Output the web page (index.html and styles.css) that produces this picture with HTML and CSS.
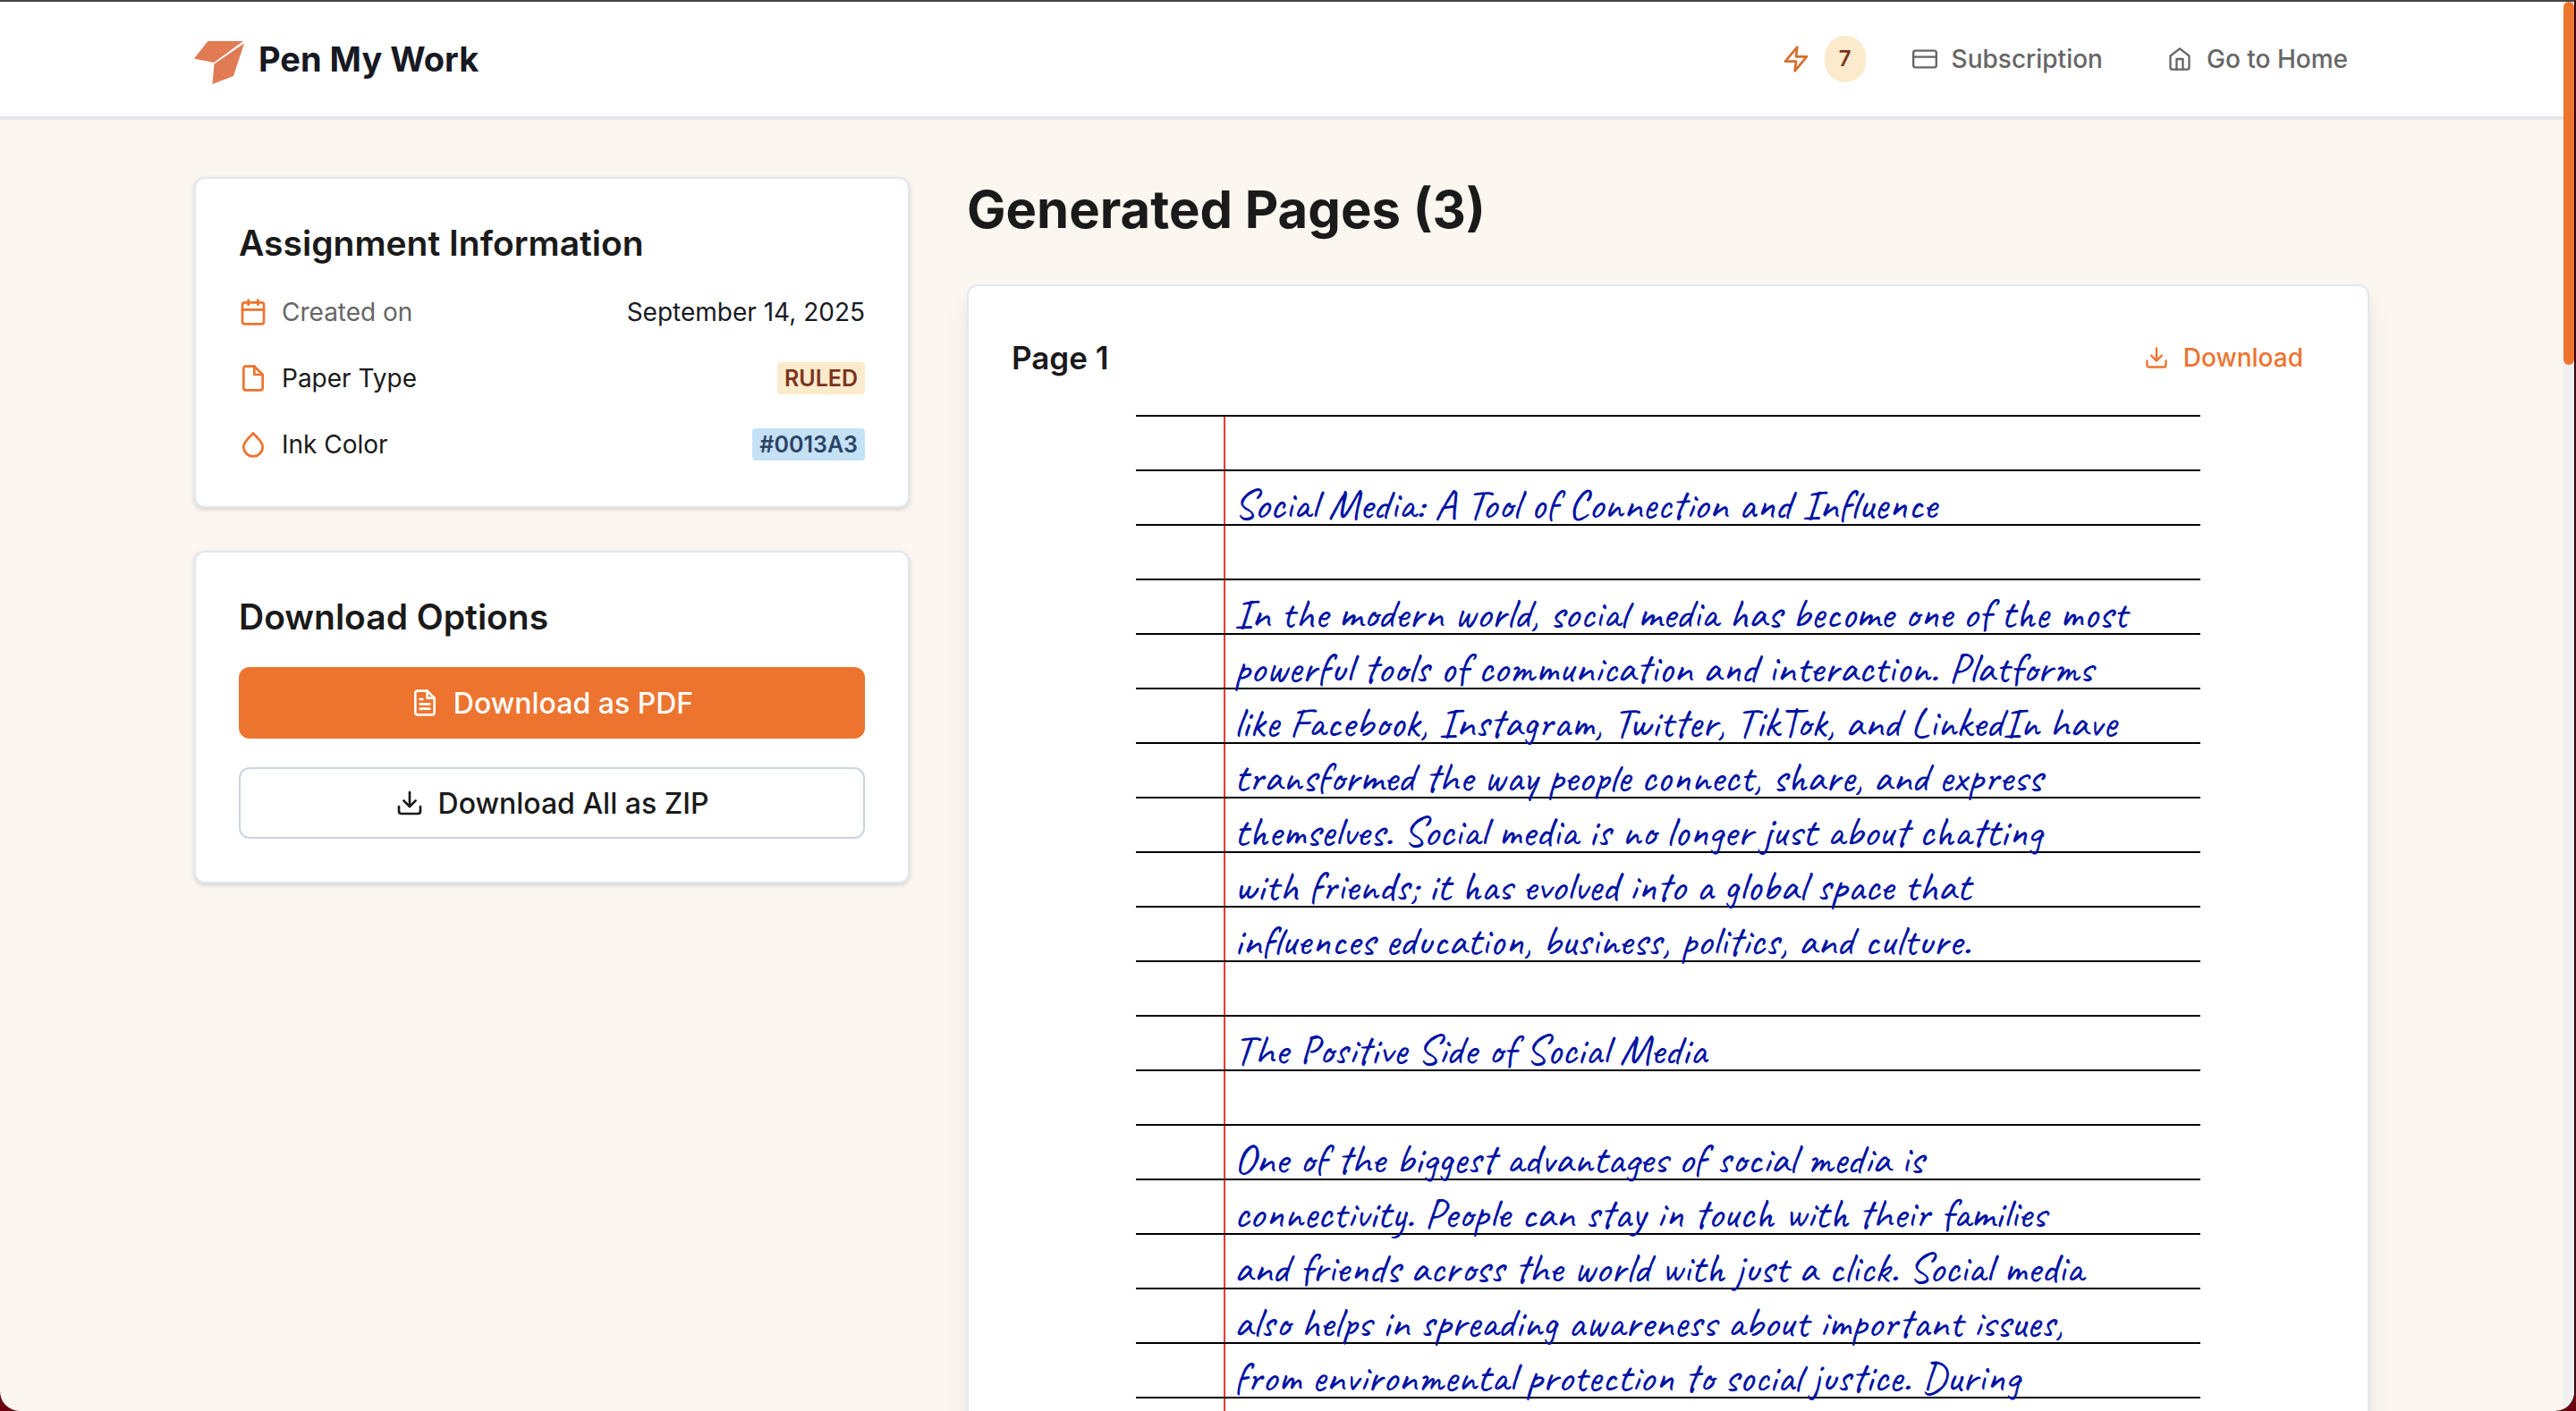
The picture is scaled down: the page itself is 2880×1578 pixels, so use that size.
FILE: index.html
```html
<!DOCTYPE html>
<html lang="en">
<head>
    <meta charset="UTF-8">
    <title>Pen My Work</title>
    <link rel="stylesheet" href="styles.css">
</head>
<body>
<div class="window">
    <div class="page">
        <!-- Header -->
        <header class="header">
            <div class="container header-inner">
                <a class="brand" href="#">
                    <svg class="logo" viewBox="0 -8 56 56" aria-hidden="true">
                        <path d="M15.500 0H55L22 24L0 19.500z"/>
                        <path d="M56 2.500L44 39L20.500 48L22.500 25.500z"/>
                    </svg>
                    <span>Pen My Work</span>
                </a>
                <nav class="nav">
                    <div class="credits">
                        <svg class="icon" viewBox="0 0 24 24"><path d="M13 2 3 14h9l-1 8 10-12h-9z"/></svg>
                        <span class="credits-count">7</span>
                    </div>
                    <a class="nav-link" href="#">
                        <svg class="icon icon-small" viewBox="0 0 24 24"><rect width="22" height="16" x="1" y="4" rx="2"/><path d="M1 10h22"/></svg>
                        Subscription
                    </a>
                    <a class="nav-link" href="#">
                        <svg class="icon icon-small" viewBox="0 0 24 24"><path d="m3 9 9-7 9 7v11a2 2 0 0 1-2 2H5a2 2 0 0 1-2-2z"/><path d="M9 22V12h6v10"/></svg>
                        Go to Home
                    </a>
                </nav>
            </div>
        </header>

        <!-- Main content -->
        <main class="container content">
            <aside class="sidebar">
                <section class="card">
                    <h2>Assignment Information</h2>
                    <dl class="info">
                        <div class="info-row">
                            <dt class="muted">
                                <svg class="icon" viewBox="0 0 24 24"><path d="M8 2v4M16 2v4"/><rect width="18" height="18" x="3" y="4" rx="2"/><path d="M3 10h18"/></svg>
                                Created on
                            </dt>
                            <dd>September 14, 2025</dd>
                        </div>
                        <div class="info-row">
                            <dt>
                                <svg class="icon" viewBox="0 0 24 24"><path d="M13 2H6a2 2 0 0 0-2 2v16a2 2 0 0 0 2 2h12a2 2 0 0 0 2-2V9z"/><path d="M13 2v7h7"/></svg>
                                Paper Type
                            </dt>
                            <dd class="badge badge-paper">RULED</dd>
                        </div>
                        <div class="info-row">
                            <dt>
                                <svg class="icon" viewBox="0 0 24 24"><path d="M12 2.500C9.500 6 4 9.500 4 14a8 8 0 0 0 16 0c0-4.500-5.500-8-8-11.500z"/></svg>
                                Ink Color
                            </dt>
                            <dd class="badge badge-ink">#0013A3</dd>
                        </div>
                    </dl>
                </section>

                <section class="card">
                    <h2>Download Options</h2>
                    <div class="actions">
                        <button class="button button-primary" type="button">
                            <svg class="icon" viewBox="0 0 24 24"><path d="M14 2H6a2 2 0 0 0-2 2v16a2 2 0 0 0 2 2h12a2 2 0 0 0 2-2V8z"/><path d="M14 2v6h6"/><path d="M10 9H8M16 13H8M16 17H8"/></svg>
                            Download as PDF
                        </button>
                        <button class="button button-outline" type="button">
                            <svg class="icon" viewBox="0 0 24 24"><path d="M21 15v4a2 2 0 0 1-2 2H5a2 2 0 0 1-2-2v-4"/><path d="m7 10 5 5 5-5"/><path d="M12 15V3"/></svg>
                            Download All as ZIP
                        </button>
                    </div>
                </section>
            </aside>

            <section class="pages">
                <h1>Generated Pages (3)</h1>
                <article class="page-card">
                    <div class="page-head">
                        <h3>Page 1</h3>
                        <button class="link-button" type="button">
                            <svg class="icon icon-small" viewBox="0 0 24 24"><path d="M21 15v4a2 2 0 0 1-2 2H5a2 2 0 0 1-2-2v-4"/><path d="m7 10 5 5 5-5"/><path d="M12 15V3"/></svg>
                            Download
                        </button>
                    </div>
                    <div class="paper">
                        <p>Social Media: A Tool of Connection and Influence</p>
                        <p>In the modern world, social media has become one of the most<br>
                            powerful tools of communication and interaction. Platforms<br>
                            like Facebook, Instagram, Twitter, TikTok, and LinkedIn have<br>
                            transformed the way people connect, share, and express<br>
                            themselves. Social media is no longer just about chatting<br>
                            with friends; it has evolved into a global space that<br>
                            influences education, business, politics, and culture.</p>
                        <p>The Positive Side of Social Media</p>
                        <p>One of the biggest advantages of social media is<br>
                            connectivity. People can stay in touch with their families<br>
                            and friends across the world with just a click. Social media<br>
                            also helps in spreading awareness about important issues,<br>
                            from environmental protection to social justice. During</p>
                    </div>
                </article>
            </section>
        </main>
    </div>
    <div class="scrollbar"><div class="scrollbar-thumb"></div></div>
</div>
</body>
</html>
```
FILE: styles.css
```css
* {
    box-sizing: border-box;
}

body {
    margin: 0;
    font-family: Inter, sans-serif;
    font-size: 28px;
    line-height: 40px;
    color: #1a1a1a;
    background-color: #6b0010;
}

h1, h2, h3, p, dl, dd {
    margin: 0;
}

.window {
    display: flex;
    height: 100vh;
    overflow: hidden;
    margin-right: 1px;
    border-top: 2px solid #444444;
    border-right: 1px solid #000000;
    border-radius: 0 0 22px 22px;
    background-color: #fbf6ef;
}

.page {
    flex: 1;
    min-width: 0;
    overflow: hidden;
}

.container {
    max-width: 2560px;
    margin: 0 auto;
    padding: 0 64px;
}

.icon {
    width: 32px;
    height: 32px;
    flex-shrink: 0;
    fill: none;
    stroke: currentColor;
    stroke-width: 2;
    stroke-linecap: round;
    stroke-linejoin: round;
}

.icon-small {
    width: 28px;
    height: 28px;
}

/* Header */
.header {
    background-color: #ffffff;
    border-bottom: 4px solid #e2e8ec;
}

.header-inner {
    display: flex;
    align-items: center;
    justify-content: space-between;
    height: 128px;
}

.brand {
    display: flex;
    align-items: center;
    gap: 16px;
    font-size: 38px;
    font-weight: 700;
    color: #171923;
    text-decoration: none;
}

.logo {
    width: 56px;
    height: 56px;
    fill: #e07b54;
}

.nav {
    display: flex;
    align-items: center;
    gap: 24px;
}

.credits {
    display: flex;
    align-items: center;
    gap: 16px;
    margin-right: 4px;
    color: #d46f2e;
}

.credits-count {
    padding: 6px 16px;
    border-radius: 26px;
    font-size: 24px;
    font-weight: 600;
    color: #7b341e;
    background-color: #fbeacb;
}

.nav-link {
    display: flex;
    align-items: center;
    gap: 16px;
    padding: 0 24px;
    font-weight: 500;
    color: #666666;
    text-decoration: none;
}

/* Content */
.content {
    display: grid;
    grid-template-columns: 25fr 49fr;
    align-items: start;
    gap: 64px;
    padding-top: 64px;
}

.sidebar {
    display: grid;
    gap: 48px;
}

.card {
    padding: 48px;
    border: 2px solid #e2e8f0;
    border-radius: 12px;
    background-color: #ffffff;
    box-shadow: 0 2px 6px rgba(0, 0, 0, 0.1), 0 2px 4px rgba(0, 0, 0, 0.06);
}

.card h2 {
    margin-bottom: 32px;
    font-size: 39px;
    font-weight: 600;
    line-height: 48px;
}

.info {
    display: grid;
    gap: 32px;
}

.info-row {
    display: flex;
    align-items: center;
    justify-content: space-between;
    height: 42px;
}

.info-row dt {
    display: flex;
    align-items: center;
    gap: 16px;
}

.info-row .icon {
    color: #ed742f;
}

.info-row dd {
    color: #171923;
}

.info-row .muted {
    color: #666666;
}

.info-row .badge {
    padding: 0 8px;
    border-radius: 4px;
    font-size: 25px;
    font-weight: 600;
    line-height: 36px;
}

.info-row .badge-paper {
    color: #7b341e;
    background-color: #fbeacb;
}

.info-row .badge-ink {
    color: #2c4365;
    background-color: #c4e1f6;
}

.actions {
    display: grid;
    gap: 32px;
}

.button {
    display: flex;
    align-items: center;
    justify-content: center;
    gap: 16px;
    height: 80px;
    border: none;
    border-radius: 12px;
    font-family: inherit;
    font-size: 32px;
    font-weight: 500;
    cursor: pointer;
}

.button-primary {
    color: #ffffff;
    background-color: #ed742f;
}

.button-outline {
    color: #1a1a1a;
    background-color: #ffffff;
    border: 2px solid #cbd5e0;
}

/* Generated pages */
.pages h1 {
    margin-bottom: 48px;
    font-size: 58px;
    font-weight: 700;
    line-height: 72px;
}

.page-card {
    padding: 48px;
    border: 2px solid #e2e8f0;
    border-radius: 12px;
    background-color: #ffffff;
    box-shadow: 0 20px 30px rgba(0, 0, 0, 0.06), 0 8px 12px rgba(0, 0, 0, 0.04);
}

.page-head {
    display: flex;
    align-items: center;
    justify-content: space-between;
    height: 64px;
    margin-bottom: 32px;
}

.page-head h3 {
    font-size: 35px;
    font-weight: 600;
}

.link-button {
    display: flex;
    align-items: center;
    gap: 16px;
    padding: 0 24px;
    border: none;
    font-family: inherit;
    font-size: 28px;
    font-weight: 500;
    color: #ed742f;
    background: none;
    cursor: pointer;
}

/* Ruled sheet: black rules every 61px and a red margin line */
.paper {
    width: 81%;
    aspect-ratio: 210 / 297;
    margin: 0 auto;
    padding: 70px 0 0 109px;
    font-family: Caveat, cursive;
    font-size: 48px;
    line-height: 61px;
    white-space: nowrap;
    color: #0013a3;
    background-image:
        repeating-linear-gradient(#000000 0 2px, transparent 2px 61px),
        linear-gradient(90deg, transparent 98px, #ee3a2c 98px 100px, transparent 100px);
}

.paper p {
    margin-bottom: 61px;
}

/* Scrollbar */
.scrollbar {
    width: 12px;
    background-color: #f0f0f0;
}

.scrollbar-thumb {
    height: 406px;
    border-radius: 6px;
    background-color: #ed742f;
}
```
